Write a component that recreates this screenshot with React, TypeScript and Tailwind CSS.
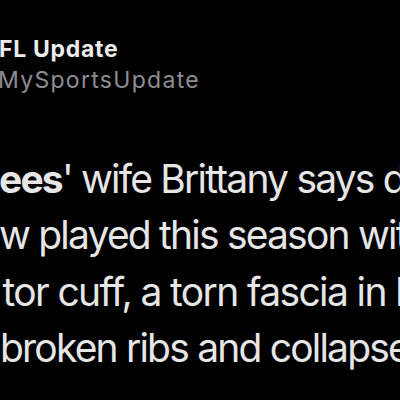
export default function App() {
  return (
    <div className="w-[400px] h-[400px] bg-black overflow-hidden text-[#e6e6e6] font-['Inter','Noto_Sans',sans-serif]">
      <div className="pt-[34px]">
        <div className="whitespace-nowrap text-[23px] font-bold leading-[31px] tracking-[0.7px] ml-[-1px] text-[#ececec]">FL Update</div>
        <div className="whitespace-nowrap text-[23px] leading-[31px] tracking-[1.3px] text-[#8e8e93] ml-[-2px]">MySportsUpdate</div>
      </div>
      <div className="mt-[54.5px] text-[39px] leading-[56.5px] tracking-[-1.8px]">
        <div className="whitespace-nowrap ml-[-1px]"><span className="font-bold">ees</span>' wife Brittany says drew</div>
        <div className="whitespace-nowrap ml-[-1px]">w played this season with</div>
        <div className="whitespace-nowrap ml-[2.5px] tracking-[-1.62px]">tor cuff, a torn fascia in his left</div>
        <div className="whitespace-nowrap ml-[0px]">broken ribs and collapsed</div>
      </div>
    </div>
  );
}
